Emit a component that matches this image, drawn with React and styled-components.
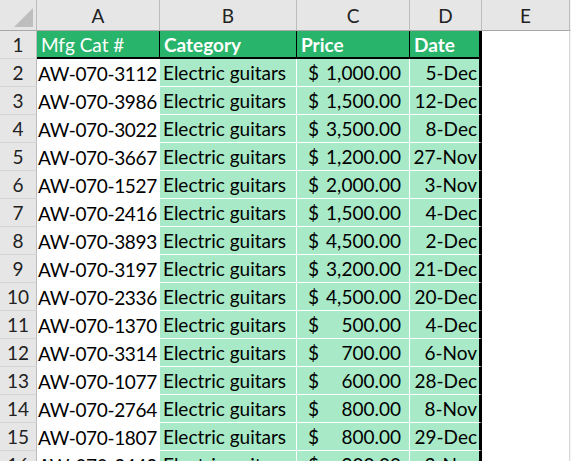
import React from 'react';
import styled, { createGlobalStyle } from 'styled-components';

const rows = [
  ['AW-070-3112', '1,000.00', '5-Dec'],
  ['AW-070-3986', '1,500.00', '12-Dec'],
  ['AW-070-3022', '3,500.00', '8-Dec'],
  ['AW-070-3667', '1,200.00', '27-Nov'],
  ['AW-070-1527', '2,000.00', '3-Nov'],
  ['AW-070-2416', '1,500.00', '4-Dec'],
  ['AW-070-3893', '4,500.00', '2-Dec'],
  ['AW-070-3197', '3,200.00', '21-Dec'],
  ['AW-070-2336', '4,500.00', '20-Dec'],
  ['AW-070-1370', '500.00', '4-Dec'],
  ['AW-070-3314', '700.00', '6-Nov'],
  ['AW-070-1077', '600.00', '28-Dec'],
  ['AW-070-2764', '800.00', '8-Nov'],
  ['AW-070-1807', '800.00', '29-Dec'],
  ['AW-070-3443', '900.00', '3-Nov'],
];

const GlobalStyle = createGlobalStyle`
  html, body {
    margin: 0;
    background: #fff;
    overflow: hidden;
  }
  body {
    font-family: Lato, "Open Sans", sans-serif;
    font-size: 19px;
    color: #000;
  }
`;

const Sheet = styled.div`
  display: grid;
  grid-template-columns: 37px 123px 137px 113px 72px 88px 1fr;
  grid-template-rows: 31px 28px;
  grid-auto-rows: 28px;
  width: 571px;
  height: 461px;
  overflow: hidden;
`;

const Corner = styled.div`
  position: relative;
  background: #e6e6e6;
  border-right: 1px solid #bcbcbc;
  border-bottom: 1px solid #a8a8a8;
  box-sizing: border-box;

  &::after {
    content: '';
    position: absolute;
    right: 3px;
    bottom: 3px;
    border-style: solid;
    border-width: 0 0 19px 19px;
    border-color: transparent transparent #bebebe transparent;
  }
`;

const ColHead = styled.div`
  display: flex;
  align-items: center;
  justify-content: center;
  background: #e6e6e6;
  border-right: 1px solid #bcbcbc;
  border-bottom: 1px solid #a8a8a8;
  box-sizing: border-box;
  color: #222;
`;

const Filler = styled.div`
  background: ${p => (p.head ? '#e6e6e6' : '#fff')};
  border-bottom: ${p => (p.head ? '1px solid #a8a8a8' : 'none')};
  border-left: 1px solid #f4f4f4;
  box-sizing: border-box;
`;

const RowHead = styled.div`
  display: flex;
  align-items: center;
  justify-content: center;
  background: #e6e6e6;
  border-right: 1px solid #bcbcbc;
  border-bottom: 1px solid #d4d4d4;
  box-sizing: border-box;
  color: #222;
`;

const Title = styled.div`
  display: flex;
  align-items: center;
  padding-left: 4px;
  background: #28b46a;
  color: #fff;
  font-weight: ${p => (p.bold ? 700 : 400)};
  border-right: ${p => (p.last ? '3px solid #000' : '1px solid #000')};
  border-bottom: 2px solid #000;
  box-sizing: border-box;
  white-space: nowrap;
  overflow: hidden;
`;

const IdCell = styled.div`
  display: flex;
  align-items: center;
  padding-left: 1px;
  background: #fff;
  border-right: 1px solid #fff;
  letter-spacing: -0.35px;
  white-space: nowrap;
  overflow: hidden;
  box-sizing: border-box;
`;

const GreenCell = styled.div`
  display: flex;
  align-items: center;
  justify-content: ${p => p.align || 'flex-start'};
  padding: 0 ${p => p.pr || 0}px 0 ${p => p.pl || 0}px;
  background: #a8eac7;
  border-right: ${p => (p.last ? '3px solid #000' : '1px solid #fff')};
  border-bottom: 1px solid #fff;
  white-space: nowrap;
  overflow: hidden;
  box-sizing: border-box;
`;

const Blank = styled.div`
  background: #fff;
  border-right: 1px solid #d9d9d9;
  box-sizing: border-box;
`;

export default function App() {
  return (
    <>
      <GlobalStyle />
      <Sheet>
        <Corner />
        {['A', 'B', 'C', 'D', 'E'].map(l => (
          <ColHead key={l}>{l}</ColHead>
        ))}
        <Filler head />

        <RowHead>1</RowHead>
        <Title>Mfg Cat #</Title>
        <Title bold>Category</Title>
        <Title bold>Price</Title>
        <Title bold last>Date</Title>
        <Blank />
        <Filler />

        {rows.map((r, i) => (
          <React.Fragment key={r[0]}>
            <RowHead>{i + 2}</RowHead>
            <IdCell>{r[0]}</IdCell>
            <GreenCell pl={3}>Electric guitars</GreenCell>
            <GreenCell align="space-between" pl={11} pr={8}>
              <span>$</span>
              <span>{r[1]}</span>
            </GreenCell>
            <GreenCell align="flex-end" pr={2} last>
              {r[2]}
            </GreenCell>
            <Blank />
            <Filler />
          </React.Fragment>
        ))}
      </Sheet>
    </>
  );
}
